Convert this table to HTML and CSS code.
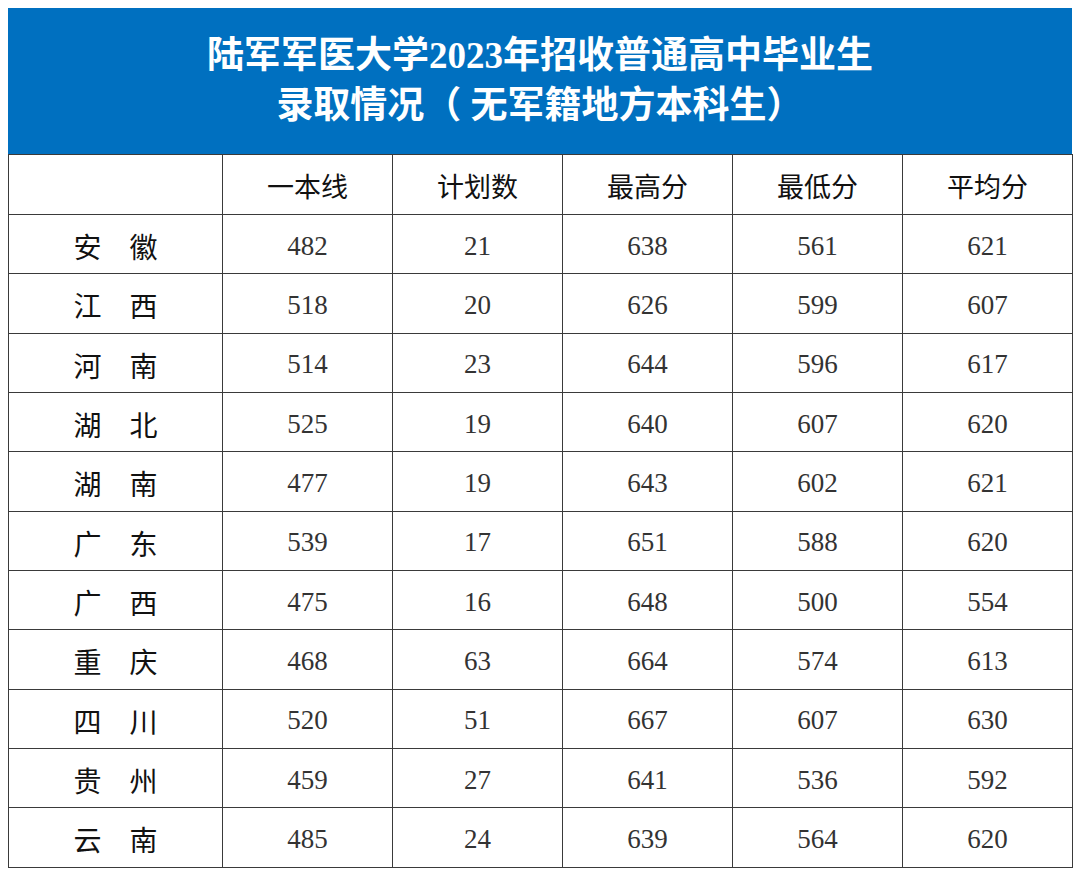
FILE: index.html
```html
<!DOCTYPE html>
<html lang="zh">
<head>
<meta charset="utf-8">
<link rel="stylesheet" href="styles.css">
</head>
<body>
<div class="sheet">
  <div class="banner">
    <div class="title-line">陆军军医大学2023年招收普通高中毕业生</div>
    <div class="title-line">录取情况（ 无军籍地方本科生）</div>
  </div>
  <table class="grid">
    <colgroup>
      <col class="c-prov"><col class="c-num"><col class="c-num"><col class="c-num"><col class="c-num"><col class="c-num">
    </colgroup>
    <thead>
      <tr><th></th><th>一本线</th><th>计划数</th><th>最高分</th><th>最低分</th><th>平均分</th></tr>
    </thead>
    <tbody>
      <tr><td class="prov">安　徽</td><td>482</td><td>21</td><td>638</td><td>561</td><td>621</td></tr>
      <tr><td class="prov">江　西</td><td>518</td><td>20</td><td>626</td><td>599</td><td>607</td></tr>
      <tr><td class="prov">河　南</td><td>514</td><td>23</td><td>644</td><td>596</td><td>617</td></tr>
      <tr><td class="prov">湖　北</td><td>525</td><td>19</td><td>640</td><td>607</td><td>620</td></tr>
      <tr><td class="prov">湖　南</td><td>477</td><td>19</td><td>643</td><td>602</td><td>621</td></tr>
      <tr><td class="prov">广　东</td><td>539</td><td>17</td><td>651</td><td>588</td><td>620</td></tr>
      <tr><td class="prov">广　西</td><td>475</td><td>16</td><td>648</td><td>500</td><td>554</td></tr>
      <tr><td class="prov">重　庆</td><td>468</td><td>63</td><td>664</td><td>574</td><td>613</td></tr>
      <tr><td class="prov">四　川</td><td>520</td><td>51</td><td>667</td><td>607</td><td>630</td></tr>
      <tr><td class="prov">贵　州</td><td>459</td><td>27</td><td>641</td><td>536</td><td>592</td></tr>
      <tr><td class="prov">云　南</td><td>485</td><td>24</td><td>639</td><td>564</td><td>620</td></tr>
    </tbody>
  </table>
</div>
</body>
</html>
```
FILE: styles.css
```css
html, body {
  margin: 0;
  padding: 0;
  background: #ffffff;
}
.sheet {
  margin: 8px;
  width: 1064px;
}
.banner {
  background: #0070c0;
  height: 146px;
  box-sizing: border-box;
  padding-top: 23px;
  text-align: center;
  color: #ffffff;
  font-family: "Liberation Serif", "Noto Sans CJK SC", serif;
  font-weight: 700;
  font-size: 37px;
  line-height: 50px;
}
.grid {
  width: 1064px;
  border-collapse: collapse;
  table-layout: fixed;
}
.c-prov { width: 214px; }
.c-num { width: 170px; }
.grid th, .grid td {
  border: 1px solid #3a3a3a;
  height: 59.33px;
  padding: 4px 0 0 0;
  text-align: center;
  vertical-align: middle;
  box-sizing: border-box;
}
.grid th {
  font-family: "Noto Sans CJK SC", sans-serif;
  font-weight: 400;
  font-size: 27px;
  color: #111111;
  height: 60px;
  padding-top: 2px;
}
.grid td {
  font-family: "Liberation Serif", "Noto Sans CJK SC", serif;
  font-size: 27px;
  color: #333333;
}
.grid td.prov {
  font-family: "Noto Sans CJK SC", sans-serif;
  font-size: 28px;
  color: #111111;
}
```
